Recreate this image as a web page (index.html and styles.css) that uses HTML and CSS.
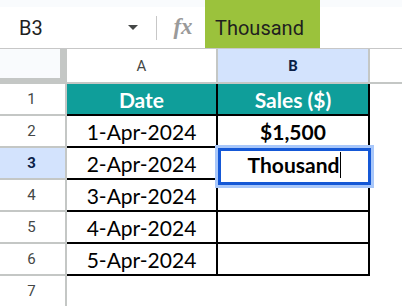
FILE: index.html
```html
<!DOCTYPE html>
<html>
<head lang="en">
    <meta charset="UTF-8">
    <title>Sheet</title>
    <link rel="stylesheet" href="styles.css">
</head>
<body>
    <header class="bar">
        <div class="namebox">
            <span class="ref">B3</span>
            <span class="caret"></span>
        </div>
        <span class="sep"></span>
        <span class="fx">fx</span>
        <div class="formula">Thousand</div>
    </header>
    <section class="sheet">
        <!-- column headers -->
        <div class="corner"></div>
        <div class="colhead">A</div>
        <div class="colhead sel">B</div>
        <div class="colhead last"></div>

        <div class="rowhead">1</div>
        <div class="cell th">Date</div>
        <div class="cell th">Sales ($)</div>
        <div class="blank"></div>

        <div class="rowhead">2</div>
        <div class="cell">1-Apr-2024</div>
        <div class="cell bold">$1,500</div>
        <div class="blank"></div>

        <div class="rowhead sel">3</div>
        <div class="cell">2-Apr-2024</div>
        <div class="cell active">
            <div class="editor"><span class="bold">Thousand</span><span class="cursor"></span></div>
        </div>
        <div class="blank"></div>

        <div class="rowhead">4</div>
        <div class="cell">3-Apr-2024</div>
        <div class="cell"></div>
        <div class="blank"></div>

        <div class="rowhead">5</div>
        <div class="cell">4-Apr-2024</div>
        <div class="cell"></div>
        <div class="blank"></div>

        <div class="rowhead">6</div>
        <div class="cell">5-Apr-2024</div>
        <div class="cell"></div>
        <div class="blank"></div>

        <div class="rowhead">7</div>
        <div class="blank"></div>
        <div class="blank"></div>
        <div class="blank"></div>
    </section>
</body>
</html>
```

FILE: styles.css
```css
body{
    margin: 0;
    background: #ffffff;
    font-family: Roboto, "Liberation Sans", sans-serif;
    color: #1f1f1f;
    overflow: hidden;
}
.bar{
    display: flex;
    align-items: center;
    height: 48px;
    background: linear-gradient(#f9fbfd 7px, #ffffff 7px);
}
.namebox{
    display: flex;
    align-items: center;
    width: 156px;
    height: 100%;
    padding-top: 7px;
    box-sizing: border-box;
}
.ref{
    margin-left: 19px;
    font-size: 20px;
    flex: 1;
}
.caret{
    width: 0;
    height: 0;
    border-left: 5px solid transparent;
    border-right: 5px solid transparent;
    border-top: 5px solid #444746;
    margin-right: 18px;
}
.sep{
    width: 1px;
    height: 24px;
    margin-top: 7px;
    background: #c7c7c7;
}
.fx{
    width: 48px;
    padding: 5px 0 0 4px;
    box-sizing: border-box;
    text-align: center;
    font-family: "Liberation Serif", serif;
    font-style: italic;
    font-weight: bold;
    font-size: 23px;
    color: #9a9a9a;
}
.formula{
    height: 100%;
    width: 115px;
    padding: 7px 0 0 10px;
    box-sizing: border-box;
    display: flex;
    align-items: center;
    background: #9bc23c;
    font-size: 20px;
    color: #1f1f1f;
}
.sheet{
    display: grid;
    grid-template-columns: 67px 151px 152px 1fr;
    grid-template-rows: 35px repeat(7, 32px);
    border-top: 1px solid #c7c7c7;
}
.sheet > div{
    box-sizing: border-box;
}
.corner{
    background: #f9fbfd;
    border-right: 7px solid #c4c7c5;
    border-bottom: 6px solid #c4c7c5;
}
.colhead{
    display: flex;
    align-items: center;
    justify-content: center;
    border-right: 2px solid #c4c7c5;
    border-bottom: 2px solid #c4c7c5;
    font-size: 15px;
    color: #444746;
}
.colhead.last{
    border-right: none;
}
.colhead.sel,
.rowhead.sel{
    background: #d3e3fd;
    color: #0b1f47;
    font-weight: bold;
}
.rowhead{
    display: flex;
    align-items: center;
    justify-content: center;
    padding-right: 2px;
    border-right: 2px solid #c4c7c5;
    border-bottom: 2px solid #c4c7c5;
    font-size: 15px;
    color: #444746;
}
.cell{
    display: flex;
    align-items: center;
    justify-content: center;
    border-right: 2px solid #000000;
    border-bottom: 2px solid #000000;
    font-family: Lato, "Liberation Sans", sans-serif;
    font-size: 21px;
    color: #000000;
}
.cell.th{
    background: #0f9e9a;
    color: #ffffff;
    font-weight: bold;
}
.bold{
    font-weight: bold;
}
.cell.active{
    position: relative;
}
.editor{
    position: absolute;
    left: 0;
    top: 0;
    width: 153px;
    height: 37px;
    box-sizing: border-box;
    border: 3px solid #1558d6;
    box-shadow: 0 0 0 3px #a8c7fa;
    background: #ffffff;
    display: flex;
    align-items: center;
    justify-content: center;
    padding-bottom: 4px;
    z-index: 2;
}
.cursor{
    width: 1px;
    height: 26px;
    margin-left: 1px;
    background: #000000;
}
```
